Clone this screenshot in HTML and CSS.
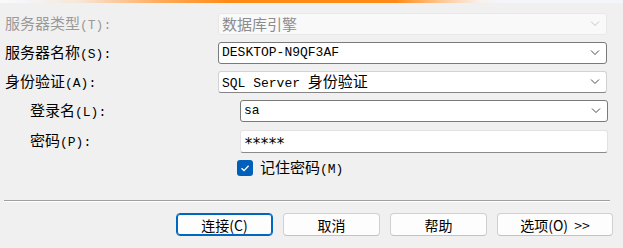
FILE: index.html
```html
<!DOCTYPE html>
<html lang="zh-CN">
<head>
  <meta charset="UTF-8" />
  <title>连接到服务器</title>
  <link rel="stylesheet" href="styles.css">
</head>
<body>

  <div class="topbar"></div>

  <div class="form">

    <div class="row">
      <label class="label disabled">服务器类型<span class="en">(T):</span></label>
      <div class="combo is-disabled">
        <span class="value">数据库引擎</span>
        <svg class="chev" width="10" height="6" viewBox="0 0 10 6"><path d="M1 0.5 L5 4.5 L9 0.5" /></svg>
      </div>
    </div>

    <div class="row">
      <label class="label">服务器名称<span class="en">(S):</span></label>
      <div class="combo is-edit">
        <span class="value en">DESKTOP-N9QF3AF</span>
        <svg class="chev" width="10" height="6" viewBox="0 0 10 6"><path d="M1 0.5 L5 4.5 L9 0.5" /></svg>
      </div>
    </div>

    <div class="row">
      <label class="label">身份验证<span class="en">(A):</span></label>
      <div class="combo">
        <span class="value"><span class="en">SQL Server </span>身份验证</span>
        <svg class="chev" width="10" height="6" viewBox="0 0 10 6"><path d="M1 0.5 L5 4.5 L9 0.5" /></svg>
      </div>
    </div>

    <div class="row sub">
      <label class="label">登录名<span class="en">(L):</span></label>
      <div class="combo is-edit">
        <span class="value en">sa</span>
        <svg class="chev" width="10" height="6" viewBox="0 0 10 6"><path d="M1 0.5 L5 4.5 L9 0.5" /></svg>
      </div>
    </div>

    <div class="row sub pass">
      <label class="label">密码<span class="en">(P):</span></label>
      <div class="input">
        <span class="value stars">*****</span>
      </div>
    </div>

    <div class="check-row">
      <span class="checkbox">
        <svg width="16" height="16" viewBox="0 0 16 16"><path d="M4.5 8.3 L7 10.6 L11.6 5.8" /></svg>
      </span>
      <span class="check-label">记住密码<span class="en">(M)</span></span>
    </div>

  </div>

  <div class="divider"></div>

  <div class="actions">
    <button class="btn primary">连接(C)</button>
    <button class="btn">取消</button>
    <button class="btn">帮助</button>
    <button class="btn wide">选项(O)&nbsp;&nbsp;&gt;&gt;</button>
  </div>

</body>
</html>
```

FILE: styles.css
```css
body {
  margin: 0;
  background-color: #f0f0f0;
  font-family: "Noto Sans CJK SC", sans-serif;
  font-size: 15px;
  color: #000;
  width: 623px;
  height: 248px;
  overflow: hidden;
}

.topbar {
  height: 3px;
  background: linear-gradient(90deg, #fafafa 0, #f3f5f8 25px, #f7e6d6 80px, #ffab5c 160px, #ff8a14 230px, #ff8a14 395px, #ffc591 440px, #f8f1ec 480px, #f3f5f8 500px, #f3f5f8 100%);
}

.en {
  font-family: "Liberation Mono", monospace;
  font-size: 13px;
}

.form {
  padding-top: 10px;
}

.row {
  display: flex;
  align-items: center;
  height: 22px;
  margin-bottom: 7px;
}

.label {
  box-sizing: border-box;
  width: 218px;
  padding-left: 5px;
  line-height: 22px;
}

.label.disabled {
  color: #9a9a9a;
}

.row.sub .label {
  width: 240px;
  padding-left: 30px;
}

.row.pass {
  height: 23px;
  margin-top: 8px;
}

.combo, .input {
  box-sizing: border-box;
  height: 22px;
  width: 389px;
  display: flex;
  align-items: center;
  padding: 0 6px 0 3px;
  background: #fff;
  border: 1px solid #d2d2d2;
  border-bottom-color: #868686;
  border-radius: 3px;
}

.row.sub .combo, .row.sub .input {
  width: 368px;
}

.input {
  height: 23px;
  border-color: #e2e2e2;
  border-bottom-color: #8a8a8a;
}

.combo.is-edit {
  border-color: #7a7a7a;
}

.combo.is-disabled {
  background: #f9f9f9;
  border-color: #e8e8e8;
  color: #8c8c8c;
}

.value {
  flex: 1;
  line-height: 20px;
  white-space: pre;
}

.value.stars {
  font-family: "DejaVu Sans Mono", monospace;
  font-size: 15px;
  letter-spacing: -1px;
  padding-top: 5px;
  line-height: 17px;
}

.chev path {
  fill: none;
  stroke: #4a4a4a;
  stroke-width: 1;
}

.is-disabled .chev path {
  stroke: #c4c4c4;
}

.check-row {
  display: flex;
  align-items: center;
  gap: 7px;
  margin-top: 5px;
  padding-left: 237px;
  height: 16px;
}

.checkbox {
  width: 16px;
  height: 16px;
  background: #005fb8;
  border-radius: 3px;
}

.checkbox svg {
  display: block;
}

.checkbox path {
  fill: none;
  stroke: #fff;
  stroke-width: 1.3;
}

.check-label {
  line-height: 16px;
}

.divider {
  margin: 24px 13px 0 4px;
  border-top: 1px solid #a0a0a0;
  border-bottom: 1px solid #fff;
}

.actions {
  display: flex;
  gap: 10px;
  padding-left: 176px;
  margin-top: 11px;
}

.btn {
  box-sizing: border-box;
  width: 97px;
  height: 23px;
  padding: 0;
  background: #fdfdfd;
  border: 1px solid #d0d0d0;
  border-bottom-color: #c2c2c2;
  border-radius: 4px;
  font-family: "Noto Sans CJK SC", sans-serif;
  font-size: 14px;
  line-height: 20px;
  color: #000;
}

.btn.primary {
  border-color: #0067c0;
  box-shadow: inset 0 0 0 1px #0067c0;
}

.btn.wide {
  width: 116px;
}
```
